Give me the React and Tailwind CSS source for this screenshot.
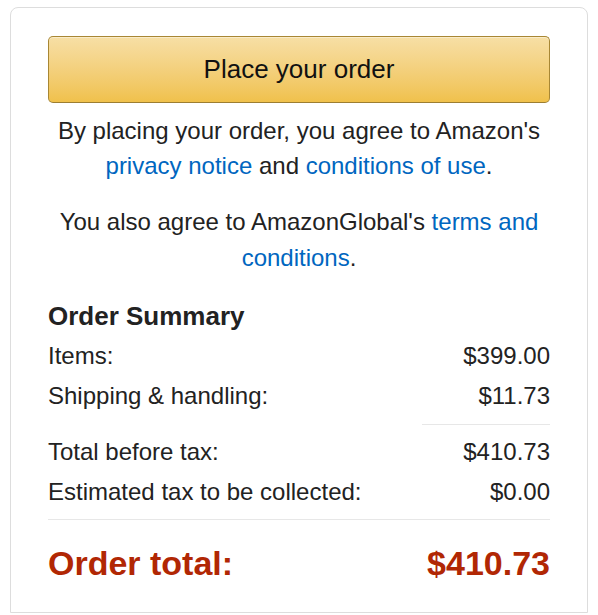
import React from "react";

const Row = ({ label, value }) => (
  <div className="flex justify-between h-[40px] items-center">
    <span>{label}</span>
    <span>{value}</span>
  </div>
);

export default function App() {
  return (
    <div
      className="w-[598px] h-[615px] bg-white overflow-hidden pt-[7px] px-[10px] text-[#222]"
      style={{ fontFamily: '"Liberation Sans", Arial, sans-serif' }}
    >
      <div className="border border-[#ddd] rounded-t-[8px] px-[37px] pt-[28px] pb-[29px] text-[24px]">
        <button className="w-full h-[67px] rounded-[5px] border border-[#a88734] border-b-[#9c7e31] bg-gradient-to-b from-[#f7dfa5] to-[#f0c14b] text-[26px] text-[#111] shadow-[inset_0_1px_0_rgba(255,255,255,0.4)]">
          Place your order
        </button>

        <p className="mt-[10px] text-center leading-[35px]">
          By placing your order, you agree to Amazon's{" "}
          <a className="text-[#0066c0]">privacy notice</a> and{" "}
          <a className="text-[#0066c0]">conditions of use</a>.
        </p>

        <p className="mt-[21px] text-center leading-[36px] px-[6px]">
          You also agree to AmazonGlobal's{" "}
          <a className="text-[#0066c0]">terms and</a>{" "}
          <a className="text-[#0066c0]">conditions</a>.
        </p>

        <h3 className="mt-[24px] text-[26px] font-bold leading-[32px]">Order Summary</h3>

        <div className="mt-[4px]">
          <Row label="Items:" value="$399.00" />
          <Row label="Shipping & handling:" value="$11.73" />
          <div className="flex justify-end mt-[8px] mb-[7px]">
            <div className="w-[128px] border-t border-[#e7e7e7]" />
          </div>
          <Row label="Total before tax:" value="$410.73" />
          <Row label="Estimated tax to be collected:" value="$0.00" />
          <div className="border-t border-[#e7e7e7] mt-[7px]" />
          <div className="flex justify-between items-center h-[40px] mt-[23px] text-[34px] font-bold text-[#b12704]">
            <span>Order total:</span>
            <span>$410.73</span>
          </div>
        </div>
      </div>
    </div>
  );
}
